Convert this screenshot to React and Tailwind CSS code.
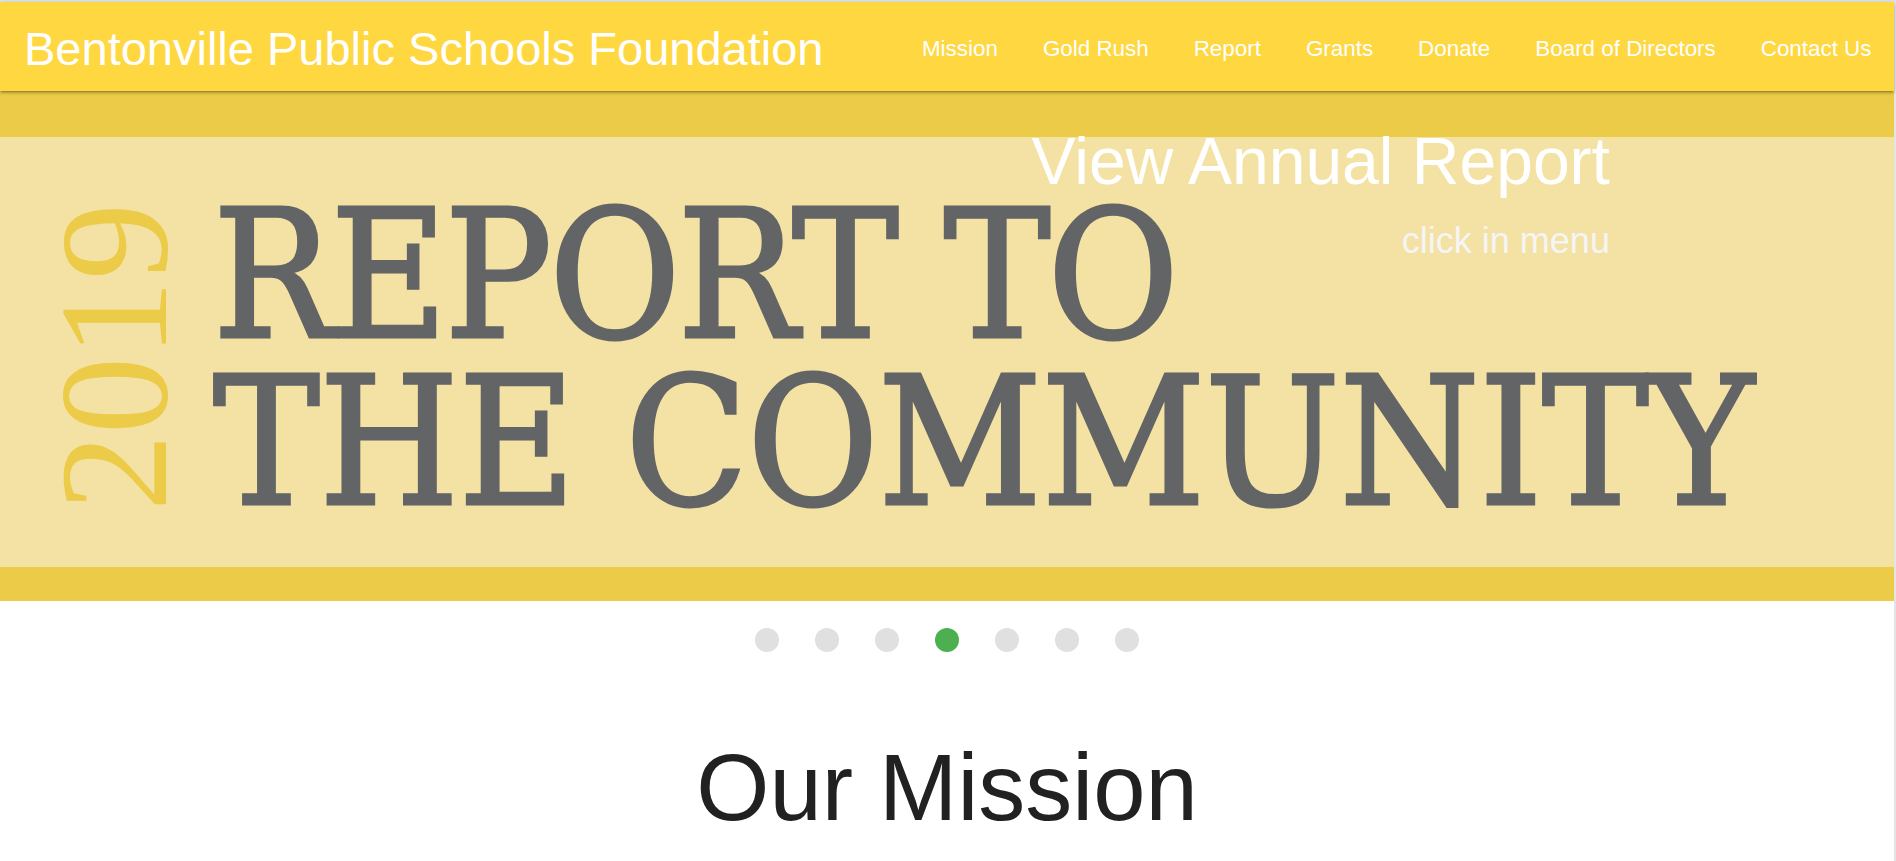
import React from "react";

const navLinks = ["Mission", "Gold Rush", "Report", "Grants", "Donate", "Board of Directors", "Contact Us"];

function Navbar() {
  return (
    <nav className="relative z-10 h-[89px] pt-[4px] bg-[#ffd740] flex items-center justify-between shadow-[0_2px_2px_0_rgba(0,0,0,0.14),0_3px_1px_-2px_rgba(0,0,0,0.12),0_1px_5px_0_rgba(0,0,0,0.2)]">
      <a href="#" className="pl-[24px] text-[47px] leading-none text-white whitespace-nowrap">
        Bentonville Public Schools Foundation
      </a>
      <ul className="flex h-full items-center">
        {navLinks.map((link) => (
          <li key={link}>
            <a href="#" className="px-[22.5px] text-[22.4px] text-white whitespace-nowrap">
              {link}
            </a>
          </li>
        ))}
      </ul>
    </nav>
  );
}

function Banner() {
  return (
    <section className="relative">
      <div className="h-[46px] bg-[#ebcb48]" />
      <div className="h-[430px] bg-[#f3e2a3] flex items-start">
        {/* year, reads bottom to top */}
        <div className="ml-[37px] mt-[66px] w-[154px] rotate-180 [writing-mode:vertical-rl] [text-orientation:sideways] font-['Liberation_Serif',serif] text-[154px] leading-none text-[#ebcb48]">
          2019
        </div>
        <div className="ml-[22px] mt-[55px] font-['DejaVu_Serif_Condensed','DejaVu_Serif',serif] font-stretch-condensed text-[178px] leading-[167px] text-[#636466] [-webkit-text-stroke:3px_#636466] whitespace-nowrap">
          <div className="tracking-[-3px]">REPORT TO</div>
          <div className="tracking-[-0.5px]">THE COMMUNITY</div>
        </div>
      </div>
      <div className="h-[34px] bg-[#ebcb48]" />

      {/* caption */}
      <div className="absolute top-[34px] right-[15%] text-right">
        <h3 className="text-[66px] leading-[1.1] text-white">View Annual Report</h3>
        <h5 className="mt-[23px] text-[36px] leading-[1.1] text-[#f5f5f5]">click in menu</h5>
      </div>
    </section>
  );
}

export default function App() {
  const dots = [0, 1, 2, 3, 4, 5, 6];
  return (
    <div className="min-h-screen bg-white border-t-2 border-r-2 border-[#e4e4e4] font-['Liberation_Sans',Arial,sans-serif]">
      <Navbar />
      <Banner />
      <div className="flex justify-center gap-[36px] pt-[27px]">
        {dots.map((d) => (
          <span
            key={d}
            className={d === 3 ? "h-6 w-6 rounded-full bg-[#4caf50]" : "h-6 w-6 rounded-full bg-[#e0e0e0]"}
          />
        ))}
      </div>
      <h2 className="mt-[84px] text-center text-[94px] leading-[1.1] text-[#212121]">Our Mission</h2>
    </div>
  );
}
